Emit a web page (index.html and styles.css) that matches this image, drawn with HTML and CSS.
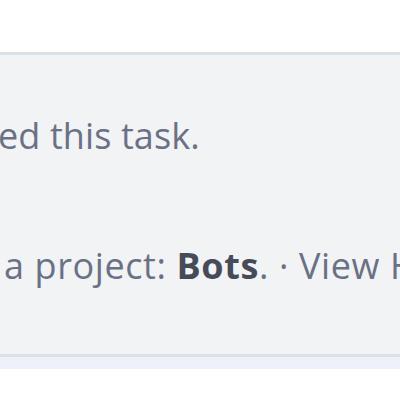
FILE: index.html
```html
<!DOCTYPE html>
<html>
<head>
<meta charset="utf-8">
<link rel="stylesheet" href="styles.css">
</head>
<body>
<div class="page">
  <div class="top"></div>
  <div class="panel">
    <div class="story">
      <div class="line first"><span class="pre">User creat</span>ed this task.</div>
      <div class="line second"><span class="pre">User added</span> a project: <b class="proj">Bots</b>. · <span class="link">View Herald Transcript</span></div>
    </div>
  </div>
  <div class="strip"></div>
</div>
</body>
</html>
```
FILE: styles.css
```css
html, body {
  margin: 0;
  padding: 0;
  background: #ffffff;
  overflow: hidden;
}
.page {
  width: 400px;
  height: 400px;
  display: flex;
  flex-direction: column;
  overflow: hidden;
}
.top {
  height: 52px;
  flex: none;
}
.panel {
  flex: none;
  height: 299px;
  background: #f2f3f5;
  border-top: 3px solid #d9e1e8;
  border-bottom: 3px solid #dbe1e6;
  overflow: hidden;
}
.story {
  padding-top: 56px;
  font-family: "Open Sans", sans-serif;
  font-size: 36px;
  letter-spacing: 0.6px;
  line-height: 50px;
  color: #6b7185;
  white-space: nowrap;
}
.pre {
  display: inline-block;
  width: 0;
  direction: rtl;
}
.first {
  margin-left: -2px;
  letter-spacing: 0.1px;
}
.second {
  margin-top: 80px;
  margin-left: -6px;
}
.proj {
  font-weight: 700;
  color: #464b5a;
}
.link {
  color: #6b7185;
}
.strip {
  flex: none;
  height: 12px;
  background: #edf1fa;
}
```
